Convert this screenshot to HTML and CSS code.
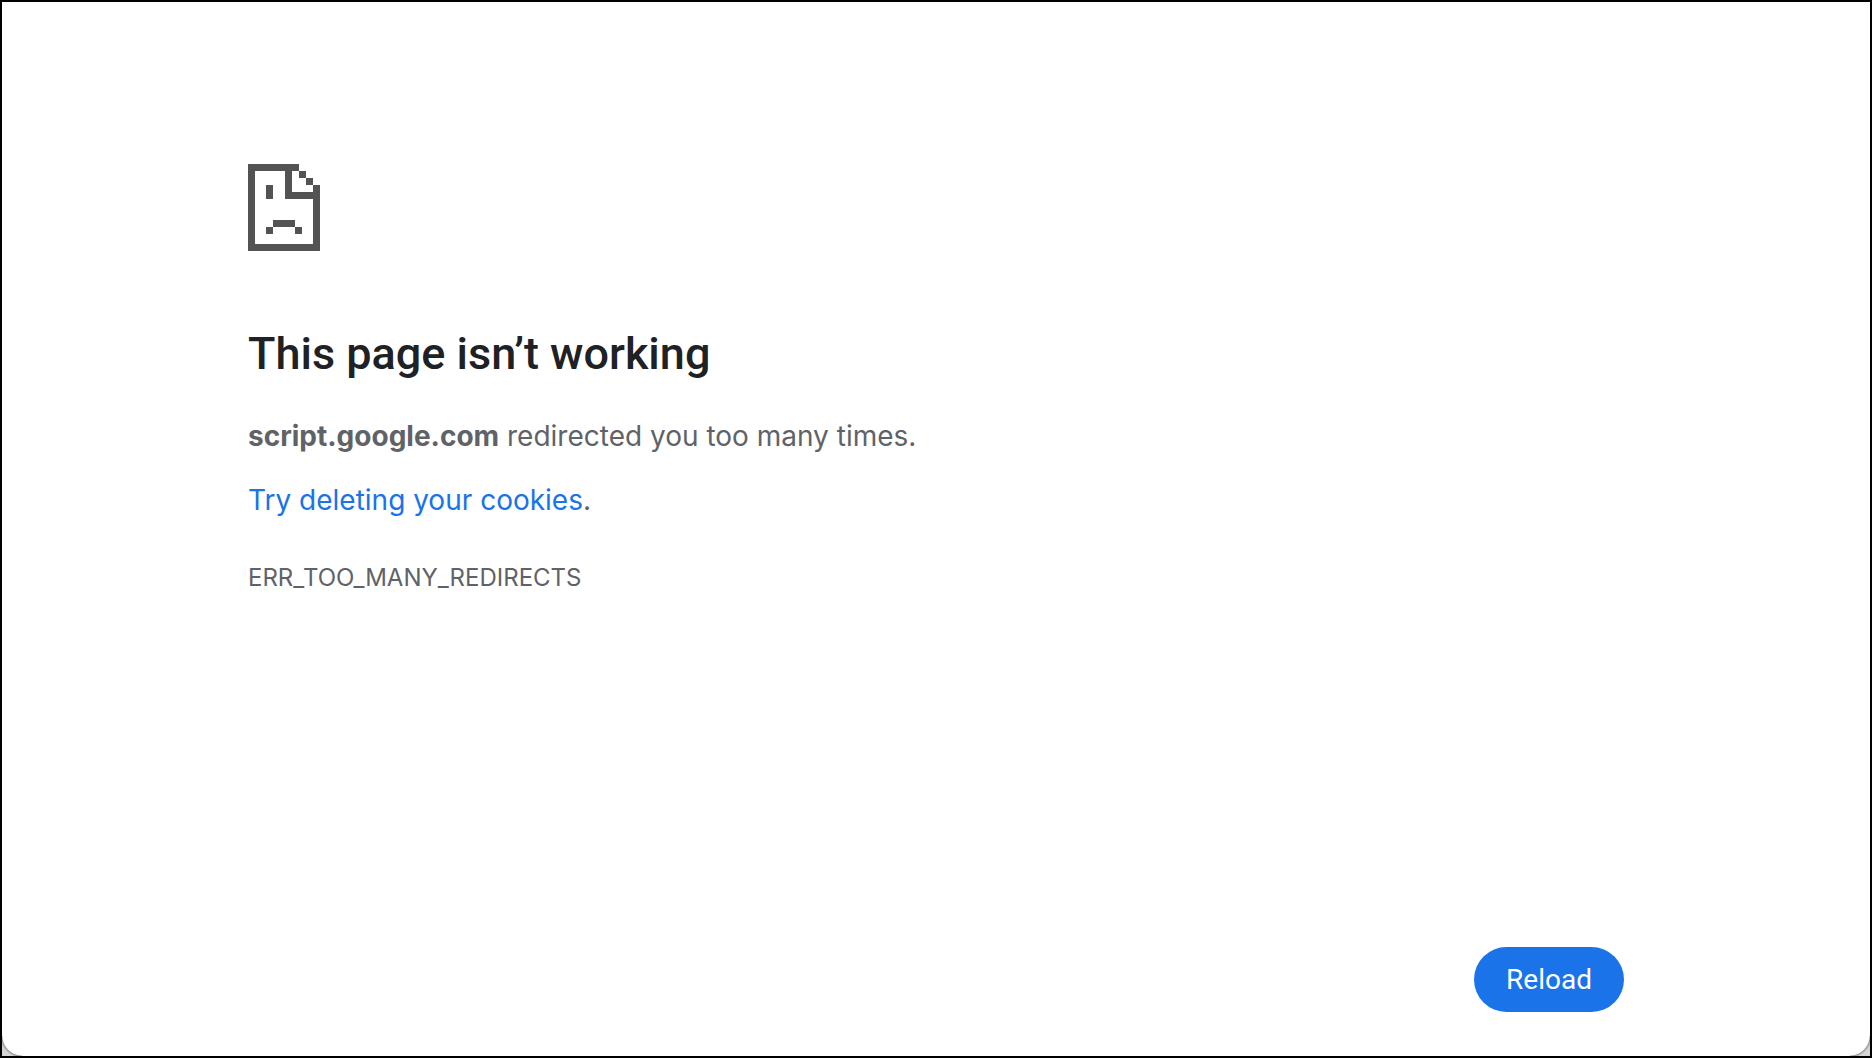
FILE: index.html
```html
<!DOCTYPE html>
<html lang="en">
<head>
<meta charset="utf-8">
<meta name="viewport" content="width=device-width, initial-scale=1">
<title>script.google.com</title>
<link rel="stylesheet" href="styles.css">
</head>
<body>
<div class="window">
  <main class="error-page">
    <svg class="sad-page" viewBox="0 0 72 87" shape-rendering="crispEdges" aria-hidden="true">
      <path fill-rule="evenodd" d="M0 0H51V7H44V28H65V21H72V87H0ZM7 7V80H65V35H37V7Z"/>
      <path d="M51 7h7v7h-7zM58 14h7v7h-7zM18 21h7v14h-7zM25 56h22v7h-22zM18 63h7v7h-7zM47 63h7v7h-7z"/>
    </svg>
    <h1 class="title">This page isn’t working</h1>
    <p class="message"><strong class="host">script.google.com</strong> redirected you too many times.</p>
    <p class="message"><a class="link" href="#">Try deleting your cookies</a>.</p>
    <p class="code">ERR_TOO_MANY_REDIRECTS</p>
    <button class="reload" type="button">Reload</button>
  </main>
</div>
</body>
</html>
```
FILE: styles.css
```css
* {
  box-sizing: border-box;
}

body {
  margin: 0;
  background: #fff;
  color: #5f6368;
  font-family: Inter, "Liberation Sans", sans-serif;
}

.window {
  display: flex;
  justify-content: center;
  min-height: 100vh;
  border: 2px solid #000;
  background:
    radial-gradient(circle at 100% 0, #fff 19px, #999 20px, #d4d4d4 22px) left bottom / 20px 20px no-repeat,
    radial-gradient(circle at 0 0, #fff 19px, #999 20px, #d4d4d4 22px) right bottom / 20px 20px no-repeat,
    #fff;
}

.error-page {
  display: flex;
  flex-direction: column;
  align-items: flex-start;
  width: 100%;
  max-width: 1424px;
  padding: 162px 24px 44px;
}

.sad-page {
  width: 72px;
  height: 87px;
  fill: #535353;
}

.title {
  margin: 75px 0 30px;
  color: #202124;
  font-family: Roboto, sans-serif;
  font-size: 45px;
  font-weight: 500;
  line-height: 56px;
}

.message {
  margin: 0 0 16px;
  font-size: 28px;
  line-height: 48px;
}

.host {
  font-weight: 700;
}

.link {
  color: #1a73e8;
  text-decoration: none;
}

.code {
  margin: 22px 0 16px;
  font-size: 24px;
  line-height: 32px;
}

.reload {
  align-self: flex-end;
  margin-top: auto;
  padding: 16px 32px;
  border: 0;
  border-radius: 33px;
  background: #1a73e8;
  color: #fff;
  font-family: Roboto, sans-serif;
  font-size: 28px;
  font-weight: 400;
  line-height: 33px;
}
```
